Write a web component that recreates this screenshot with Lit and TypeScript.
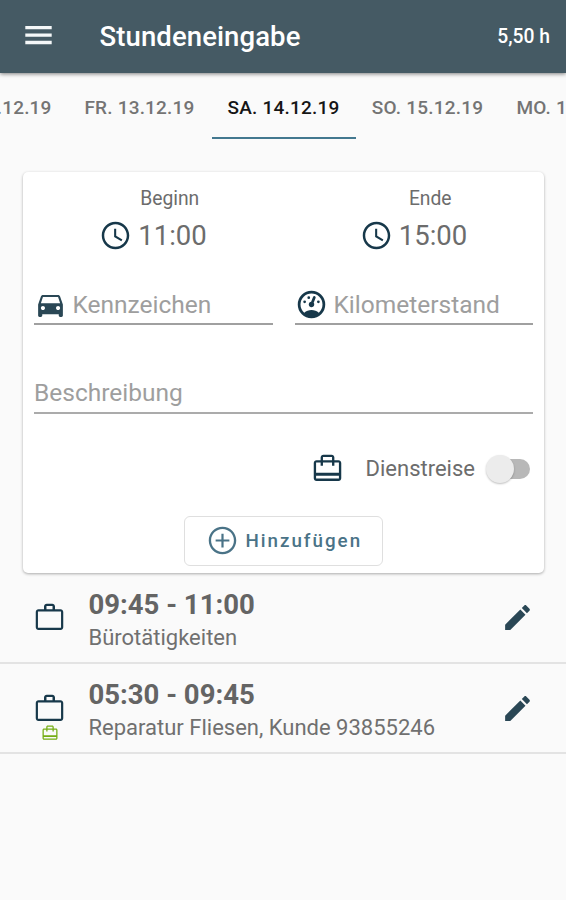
import { LitElement, html, css } from "lit";
import { customElement, property } from "lit/decorators.js";

const ICONS: Record<string, string> = {
  menu: "M2.4 18.4h19.2v-2.5H2.4v2.5zm0-5.5h19.2v-2.4H2.4v2.4zm0-7.9v2.5h19.2V5H2.4z",
  clock:
    "M11.99 2C6.47 2 2 6.48 2 12s4.47 10 9.99 10C17.52 22 22 17.52 22 12S17.52 2 11.99 2zM12 20.2c-4.53 0-8.2-3.67-8.2-8.2S7.47 3.8 12 3.8s8.2 3.67 8.2 8.2-3.67 8.2-8.2 8.2zM12.5 7H11v6l5.25 3.15.75-1.23-4.5-2.67z",
  car: "M18.92 6.01C18.72 5.42 18.16 5 17.5 5h-11c-.66 0-1.21.42-1.42 1.01L3 12v8c0 .55.45 1 1 1h1c.55 0 1-.45 1-1v-1h12v1c0 .55.45 1 1 1h1c.55 0 1-.45 1-1v-8l-2.08-5.99zM6.5 16c-.83 0-1.5-.67-1.5-1.5S5.67 13 6.5 13s1.5.67 1.5 1.5S7.33 16 6.5 16zm11 0c-.83 0-1.5-.67-1.5-1.5s.67-1.5 1.5-1.5 1.5.67 1.5 1.5-.67 1.5-1.5 1.5zM5 11l1.5-4.5h11L19 11H5z",
  gauge:
    "M12,2A10,10 0 0,0 2,12A10,10 0 0,0 12,22A10,10 0 0,0 22,12A10,10 0 0,0 12,2M12,4A8,8 0 0,1 20,12C20,14.4 19,16.5 17.3,18C15.9,16.7 14,16 12,16C10,16 8.2,16.7 6.7,18C5,16.5 4,14.4 4,12A8,8 0 0,1 12,4M14,5.89C13.62,5.9 13.26,6.15 13.1,6.54L11.81,9.77L11.71,10C11,10.13 10.41,10.6 10.14,11.26C9.73,12.29 10.23,13.45 11.26,13.86C12.29,14.27 13.45,13.77 13.86,12.74C14.12,12.08 14,11.32 13.57,10.76L13.67,10.5L14.96,7.29L14.97,7.26C15.17,6.75 14.92,6.17 14.41,5.96C14.28,5.91 14.15,5.89 14,5.89M10,6A1,1 0 0,0 9,7A1,1 0 0,0 10,8A1,1 0 0,0 11,7A1,1 0 0,0 10,6M7,9A1,1 0 0,0 6,10A1,1 0 0,0 7,11A1,1 0 0,0 8,10A1,1 0 0,0 7,9M17,9A1,1 0 0,0 16,10A1,1 0 0,0 17,11A1,1 0 0,0 18,10A1,1 0 0,0 17,9Z",
  work: "M14.2 6V3.6H9.8V6h4.4zM3.6 7.6v11.8h16.8V7.6H3.6zM20 6c1.11 0 2 .89 2 2v11c0 1.11-.89 2-2 2H4c-1.11 0-2-.89-2-2l.01-11c0-1.11.88-2 1.99-2h4V4c0-1.11.89-2 2-2h4c1.11 0 2 .89 2 2v2h4z",
  travel:
    "M20 6h-3V4c0-1.11-.89-2-2-2H9c-1.11 0-2 .89-2 2v2H4c-1.11 0-2 .89-2 2v11c0 1.11.89 2 2 2h16c1.11 0 2-.89 2-2V8c0-1.11-.89-2-2-2zM8.7 3.7h6.6V6H8.7V3.7zM20.3 19.3H3.7V17.2h16.6v2.1zm0-4.2H3.7V7.7H7V10h1.7V7.7h6.6V10H17V7.7h3.3v7.4z",
  add: "M12.8 7h-1.6v4.2H7v1.6h4.2V17h1.6v-4.2H17v-1.6h-4.2V7zM12 2C6.48 2 2 6.48 2 12s4.48 10 10 10 10-4.48 10-10S17.52 2 12 2zm0 18.3c-4.58 0-8.3-3.72-8.3-8.3S7.42 3.7 12 3.7s8.3 3.72 8.3 8.3-3.72 8.3-8.3 8.3z",
  edit: "M3 17.25V21h3.75L17.81 9.94l-3.75-3.75L3 17.25zM20.71 7.04c.39-.39.39-1.02 0-1.41l-2.34-2.34c-.39-.39-1.02-.39-1.41 0l-1.83 1.83 3.75 3.75 1.83-1.83z",
};

@customElement("md-icon")
class MdIcon extends LitElement {
  @property() name = "";
  static styles = css`
    :host { display: block; width: 33px; height: 33px; flex: none; color: #17384a; }
    svg { display: block; width: 100%; height: 100%; fill: currentColor; }
  `;
  render() {
    return html`<svg viewBox="0 0 24 24" fill-rule="evenodd"><path d=${ICONS[this.name]}></path></svg>`;
  }
}

@customElement("time-entry")
class TimeEntry extends LitElement {
  @property() time = "";
  @property() text = "";
  @property({ type: Boolean }) trip = false;
  static styles = css`
    :host { display: flex; box-sizing: border-box; height: 90.5px; border-bottom: 2px solid #e3e3e3; padding: 0 33px 0 33px; }
    .kind { width: 33px; padding-top: 28px; display: flex; flex-direction: column; align-items: center; }
    .small { width: 18px; height: 18px; color: #74ad14; margin-top: -0.5px; }
    .body { flex: 1; padding: 14.6px 0 0 22.5px; white-space: nowrap; color: #646464; }
    .time { font-size: 27.5px; line-height: 34px; font-weight: 700; }
    .text { font-size: 22px; line-height: 32px; color: #707070; }
    .edit { margin-top: 28px; margin-right: -0.5px; color: #2a4755; }
  `;
  render() {
    return html`
      <div class="kind">
        <md-icon name="work"></md-icon>
        ${this.trip ? html`<md-icon class="small" name="travel"></md-icon>` : null}
      </div>
      <div class="body">
        <div class="time">${this.time}</div>
        <div class="text">${this.text}</div>
      </div>
      <md-icon class="edit" name="edit"></md-icon>
    `;
  }
}

@customElement("app-root")
class AppRoot extends LitElement {
  static styles = css`
    :host { display: block; height: 900px; overflow: hidden; background: #fafafa; font-family: Roboto, sans-serif; color: #6c6c6c; }
    header { height: 73px; box-sizing: border-box; display: flex; align-items: center; background: #455a64; color: #fff; padding: 0 16px 0 22px; box-shadow: 0 1px 4px rgba(0, 0, 0, 0.5); position: relative; }
    header md-icon { color: #f4f7f8; margin-top: -2px; }
    .title { flex: 1; font-size: 27.5px; font-weight: 500; letter-spacing: 0.1px; margin-left: 44.5px; }
    .total { font-size: 19.3px; font-weight: 500; }
    nav { display: flex; height: 66px; margin-left: -76.5px; width: 760px; }
    .tab { flex: none; width: 144px; box-sizing: border-box; text-align: center; line-height: 70px; font-size: 19px; font-weight: 500; letter-spacing: 0.2px; color: #747474; white-space: nowrap; }
    .tab:last-child { text-align: left; padding-left: 17px; }
    .active { color: #151515; border-bottom: 2px solid #43788f; }
    .card { margin: 33px 22px 0 22.5px; height: 401px; box-sizing: border-box; padding: 0 11px 0 11.5px; background: #fff; border-radius: 5px; box-shadow: 0 1px 3px rgba(0, 0, 0, 0.32); }
    .pair { display: grid; grid-template-columns: 1fr 1fr; column-gap: 22px; }
    .slot { display: flex; flex-direction: column; align-items: center; height: 100px; padding-top: 12.5px; box-sizing: border-box; }
    .label { font-size: 19.3px; line-height: 28px; margin-left: 33px; }
    .clock { display: flex; align-items: center; gap: 6px; font-size: 27.5px; line-height: 33px; margin-top: 6.5px; margin-left: -0.5px; }
    .field { display: flex; align-items: center; box-sizing: border-box; height: 53px; padding-top: 14px; border-bottom: 2px solid #a0a0a0; font-size: 24.5px; gap: 6px; color: #9e9e9e; }
    .field .filled { color: #2a4755; margin-left: -0.5px; }
    .desc { margin-top: 35.5px; padding-top: 13px; border-color: #ababab; }
    .toggle { display: flex; align-items: center; justify-content: flex-end; height: 62px; margin-top: 23.5px; font-size: 22px; }
    .toggle md-icon { margin-right: 22px; }
    .switch { position: relative; width: 44px; height: 30px; margin: 0 3.5px 0 10.5px; }
    .track { position: absolute; left: 12px; right: 0; top: 5.5px; height: 20px; border-radius: 10px; background: #b8b8b8; }
    .knob { position: absolute; left: 0; top: 2px; width: 28px; height: 28px; border-radius: 50%; background: #ececec; box-shadow: 0 1px 2px rgba(0, 0, 0, 0.25); }
    .add { display: flex; align-items: center; justify-content: center; box-sizing: border-box; width: 199px; height: 50px; margin: 17px auto 0; border: 1.5px solid #dfdfdf; border-radius: 6px; color: #4a7387; font-size: 18.8px; font-weight: 500; letter-spacing: 2px; gap: 6.5px; padding-left: 1px; }
    .add md-icon { color: #4a7387; margin-top: -1.5px; }
  `;

  private tabs = ["DO. 12.12.19", "FR. 13.12.19", "SA. 14.12.19", "SO. 15.12.19", "MO. 16.12.19"];

  render() {
    return html`
      <header>
        <md-icon name="menu"></md-icon>
        <div class="title">Stundeneingabe</div>
        <div class="total">5,50 h</div>
      </header>
      <nav>
        ${this.tabs.map((t, i) => html`<div class="tab ${i === 2 ? "active" : ""}">${t}</div>`)}
      </nav>
      <section class="card">
        <div class="pair">
          ${[["Beginn", "11:00"], ["Ende", "15:00"]].map(
            ([label, time]) => html`<div class="slot">
              <div class="label">${label}</div>
              <div class="clock"><md-icon name="clock"></md-icon><span>${time}</span></div>
            </div>`
          )}
          <div class="field"><md-icon class="filled" name="car"></md-icon><span>Kennzeichen</span></div>
          <div class="field"><md-icon name="gauge"></md-icon><span>Kilometerstand</span></div>
        </div>
        <div class="field desc">Beschreibung</div>
        <div class="toggle">
          <md-icon name="travel"></md-icon>
          <span>Dienstreise</span>
          <div class="switch"><div class="track"></div><div class="knob"></div></div>
        </div>
        <div class="add"><md-icon name="add"></md-icon><span>Hinzufügen</span></div>
      </section>
      <time-entry time="09:45 - 11:00" text="Bürotätigkeiten"></time-entry>
      <time-entry time="05:30 - 09:45" text="Reparatur Fliesen, Kunde 93855246" trip></time-entry>
    `;
  }
}
